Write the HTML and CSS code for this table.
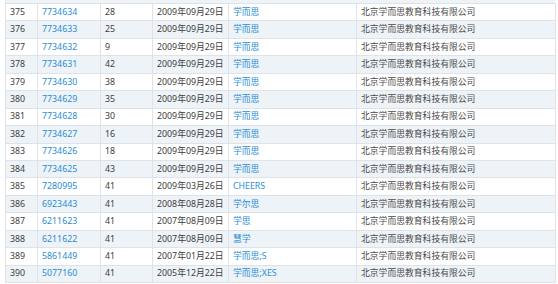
FILE: index.html
```html
<!DOCTYPE html>
<html lang="zh-CN">
<head>
  <meta charset="UTF-8">
  <title>商标列表</title>
  <link rel="stylesheet" href="styles.css">
</head>
<body>

<div class="list-wrap">
  <div class="prev-row"></div>
  <table class="tm-table">
    <colgroup>
      <col class="c-no">
      <col class="c-reg">
      <col class="c-cls">
      <col class="c-date">
      <col class="c-name">
      <col class="c-owner">
    </colgroup>
    <tbody id="rows"></tbody>
  </table>
</div>

<script>
  var data = [
    ["375", "7734634", "28", "2009年09月29日", "学而思"],
    ["376", "7734633", "25", "2009年09月29日", "学而思"],
    ["377", "7734632", "9", "2009年09月29日", "学而思"],
    ["378", "7734631", "42", "2009年09月29日", "学而思"],
    ["379", "7734630", "38", "2009年09月29日", "学而思"],
    ["380", "7734629", "35", "2009年09月29日", "学而思"],
    ["381", "7734628", "30", "2009年09月29日", "学而思"],
    ["382", "7734627", "16", "2009年09月29日", "学而思"],
    ["383", "7734626", "18", "2009年09月29日", "学而思"],
    ["384", "7734625", "43", "2009年09月29日", "学而思"],
    ["385", "7280995", "41", "2009年03月26日", "CHEERS"],
    ["386", "6923443", "41", "2008年08月28日", "学尔思"],
    ["387", "6211623", "41", "2007年08月09日", "学思"],
    ["388", "6211622", "41", "2007年08月09日", "慧学"],
    ["389", "5861449", "41", "2007年01月22日", "学而思;S"],
    ["390", "5077160", "41", "2005年12月22日", "学而思;XES"]
  ];

  var tbody = document.getElementById('rows');
  for (var i = 0; i < data.length; i++) {
    var d = data[i];
    var tr = document.createElement('tr');
    tr.innerHTML =
      '<td>' + d[0] + '</td>' +
      '<td><a href="#">' + d[1] + '</a></td>' +
      '<td>' + d[2] + '</td>' +
      '<td>' + d[3] + '</td>' +
      '<td><a href="#">' + d[4] + '</a></td>' +
      '<td class="owner">北京学而思教育科技有限公司</td>';
    tbody.appendChild(tr);
  }
</script>

</body>
</html>
```

FILE: styles.css
```css
body {
  margin: 0;
  padding: 0;
  background-color: #ffffff;
  font-family: "Noto Sans", "Noto Sans CJK SC", sans-serif;
  color: #3d3d3d;
}

.list-wrap {
  width: 550px;
  margin-left: 5px;
}

/* bottom of the row above, cut by the screenshot */
.prev-row {
  height: 3px;
  background-color: #eef3f8;
}

.tm-table {
  width: 550px;
  border-collapse: collapse;
  table-layout: fixed;
  font-size: 8.8px;
}

.c-no { width: 32px; }
.c-reg { width: 63px; }
.c-cls { width: 52px; }
.c-date { width: 76px; }
.c-name { width: 128px; }
.c-owner { width: 199px; }

.tm-table tr {
  height: 17.44px;
}

.tm-table tr:nth-child(even) {
  background-color: #eef3f8;
}

.tm-table td {
  border: 1px solid #dde3e9;
  padding: 0 0 0 4px;
  line-height: 1;
  white-space: nowrap;
  overflow: hidden;
}

.tm-table td.owner {
  color: #4a4a4a;
}

.tm-table a {
  color: #2a8dd4;
  text-decoration: none;
}
```
